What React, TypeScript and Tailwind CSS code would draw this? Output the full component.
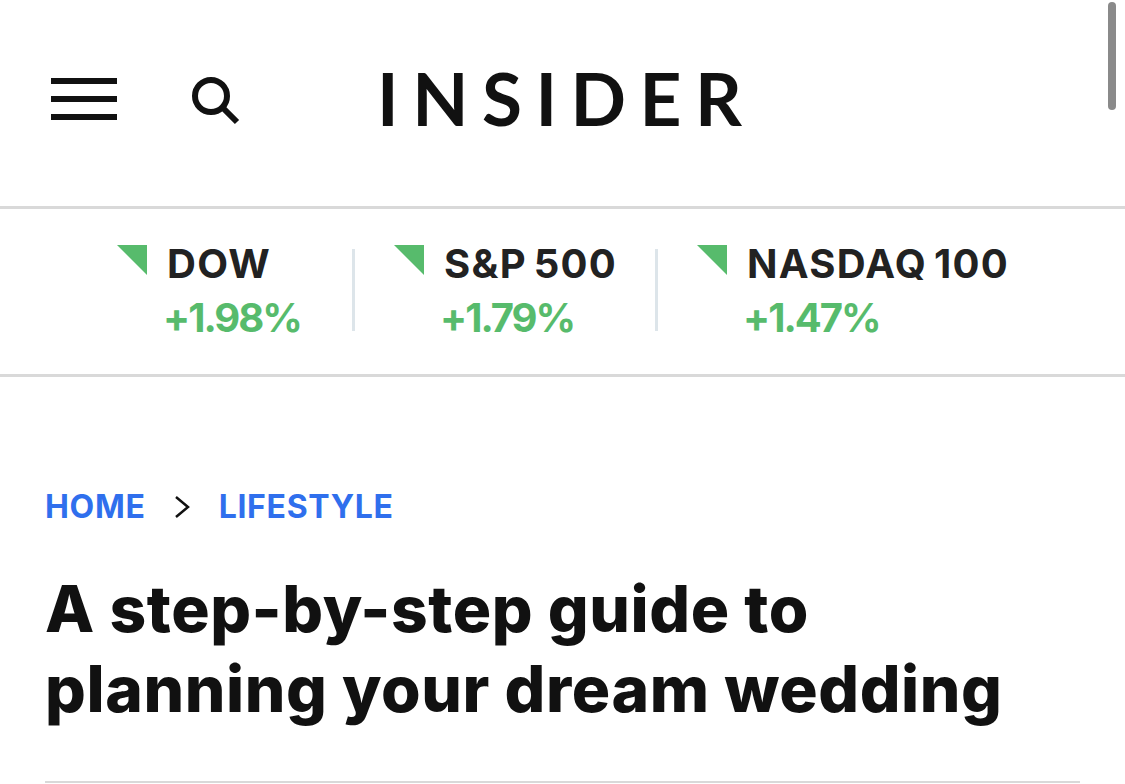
const TICKERS = [
  { name: "DOW", change: "+1.98%" },
  { name: "S&P 500", change: "+1.79%" },
  { name: "NASDAQ 100", change: "+1.47%" },
];

function Ticker({ name, change, width }: { name: string; change: string; width: string }) {
  return (
    <div className={`flex ${width}`}>
      <svg width="30" height="30" viewBox="0 0 30 30" className="mt-[36px] shrink-0">
        <polygon points="0,0 30,0 30,30" fill="#57bb6c" />
      </svg>
      <div className="ml-[16px] mt-[30px]">
        <div className="ml-[4px] text-[40px] leading-[50px] font-bold tracking-[1.3px] [word-spacing:-4px] text-[#222]">{name}</div>
        <div className="mt-[4px] text-[40px] leading-[50px] font-bold tracking-[-2px] text-[#57bb6c]">{change}</div>
      </div>
    </div>
  );
}

export default function App() {
  return (
    <div className="relative h-[784px] w-[1125px] overflow-hidden bg-white font-['Inter',sans-serif]">
      {/* overlay scrollbar */}
      <div className="absolute right-[9px] top-[2px] h-[108px] w-[8px] rounded-full bg-[#8a8a8a]" />

      <header className="flex h-[209px] items-start border-b-[3px] border-[#d9d9d9] pl-[51px]">
        <div className="mt-[78px] flex w-[66px] flex-col gap-[12px]">
          <div className="h-[6px] bg-[#111]" />
          <div className="h-[6px] bg-[#111]" />
          <div className="h-[6px] bg-[#111]" />
        </div>
        <svg width="50" height="50" viewBox="0 0 50 50" className="ml-[74px] mt-[76px]" fill="none" stroke="#111" strokeWidth="6">
          <circle cx="20" cy="20" r="16" />
          <line x1="31" y1="31" x2="46" y2="46" />
        </svg>
        <div className="ml-[136px] mt-[53px] font-['Lato',sans-serif] text-[73px] leading-[90px] font-bold tracking-[13.5px] text-[#111]">
          INSIDER
        </div>
      </header>

      <section className="flex h-[168px] border-b-[3px] border-[#d9d9d9] pl-[117px]">
        <Ticker {...TICKERS[0]} width="w-[235px]" />
        <div className="mt-[40px] h-[82px] w-[3px] bg-[#dde5ea]" />
        <div className="w-[39px]" />
        <Ticker {...TICKERS[1]} width="w-[261px]" />
        <div className="mt-[40px] h-[82px] w-[3px] bg-[#dde5ea]" />
        <div className="w-[39px]" />
        <Ticker {...TICKERS[2]} width="w-[320px]" />
      </section>

      <main className="px-[45px]">
        <nav className="mt-[110px] flex items-center text-[32px] leading-[40px] font-bold tracking-[0.7px] text-[#2f6fed]">
          <span>HOME</span>
          <svg width="16" height="24" viewBox="0 0 16 24" className="ml-[28px] mr-[29px]" fill="none" stroke="#111" strokeWidth="2.5">
            <polyline points="2,2 14,12 2,22" />
          </svg>
          <span>LIFESTYLE</span>
        </nav>
        <h1 className="mt-[42px] text-[64px] leading-[80px] font-extrabold tracking-[0.6px] text-[#111]">
          A step-by-step guide to
          <br />
          planning your dream wedding
        </h1>
        <div className="mt-[52px] h-[2px] w-[1035px] bg-[#d9d9d9]" />
      </main>
    </div>
  );
}
